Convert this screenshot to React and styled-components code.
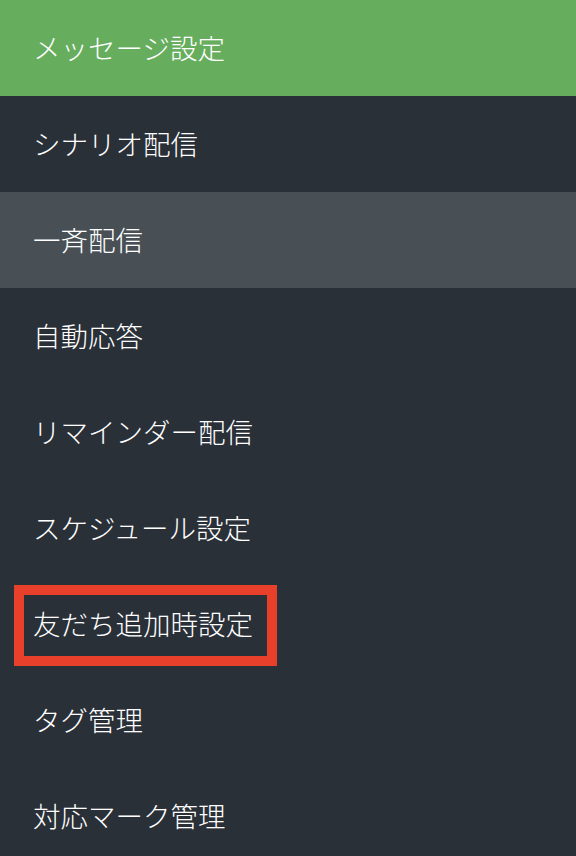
import React from "react";
import styled, { createGlobalStyle } from "styled-components";

const Global = createGlobalStyle`
  html, body { margin: 0; padding: 0; background: #2a3038; }
  body { font-family: "Noto Sans CJK JP", "Noto Sans", sans-serif; }
`;

const Menu = styled.nav`
  width: 576px;
  height: 856px;
  overflow: hidden;
  background: #2a3038;
  display: flex;
  flex-direction: column;
`;

const bg = { header: "#67ad5e", active: "#485055", normal: "#2a3038" };

const Item = styled.div`
  position: relative;
  flex: 0 0 96px;
  height: 96px;
  box-sizing: border-box;
  display: flex;
  align-items: center;
  padding: 0 0 3px 33px;
  background: ${(p) => bg[p.$variant || "normal"]};
  color: #ffffff;
  font-size: 27.5px;
  font-weight: 300;
  white-space: nowrap;
`;

const Highlight = styled.span`
  position: absolute;
  left: 14px;
  top: 9px;
  width: 263px;
  height: 81px;
  box-sizing: border-box;
  border: 10px solid #e8402a;
  pointer-events: none;
`;

const items = [
  { label: "メッセージ設定", variant: "header" },
  { label: "シナリオ配信" },
  { label: "一斉配信", variant: "active" },
  { label: "自動応答" },
  { label: "リマインダー配信" },
  { label: "スケジュール設定" },
  { label: "友だち追加時設定", marked: true },
  { label: "タグ管理" },
  { label: "対応マーク管理" },
];

export default function App() {
  return (
    <>
      <Global />
      <Menu>
        {items.map((it) => (
          <Item key={it.label} $variant={it.variant}>
            {it.label}
            {it.marked && <Highlight />}
          </Item>
        ))}
      </Menu>
    </>
  );
}
